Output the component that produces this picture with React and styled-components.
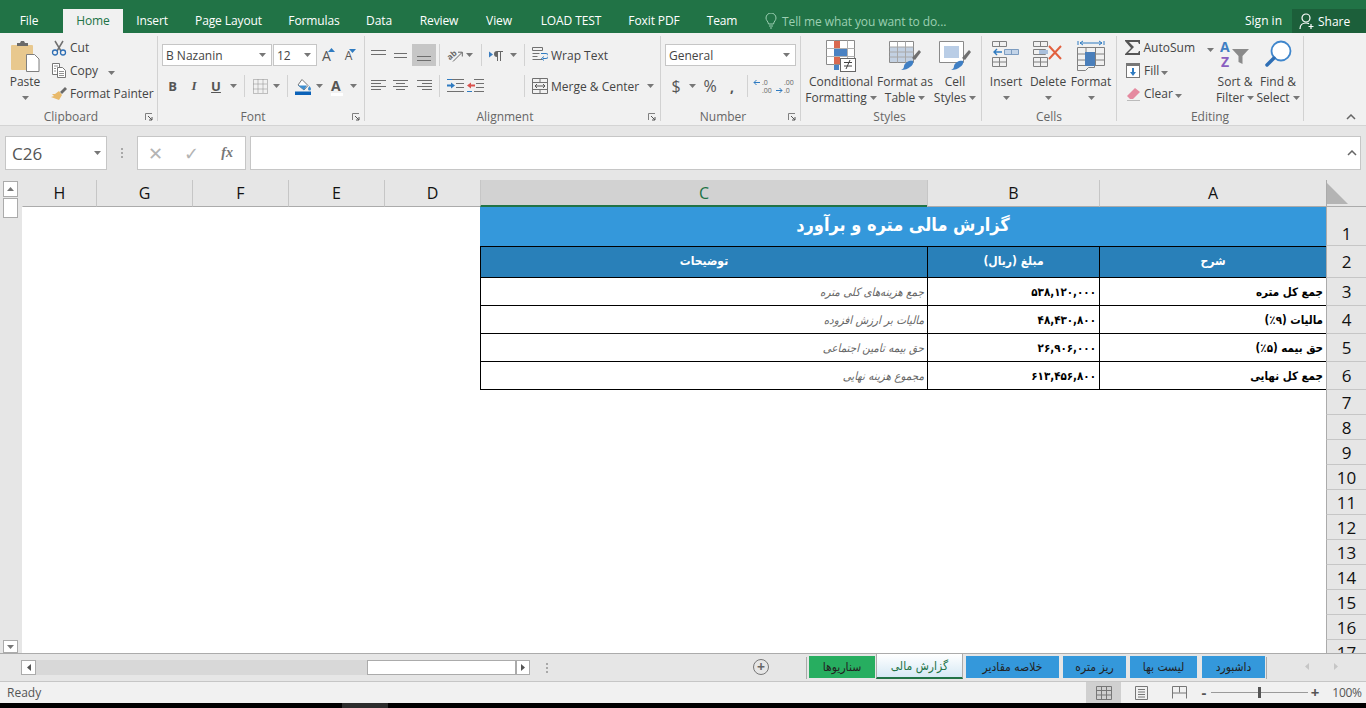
// App.jsx
import React from "react";
import styled, { createGlobalStyle } from "styled-components";

const GlobalStyle = createGlobalStyle`
  html, body { margin: 0; padding: 0; }
  body {
    width: 1366px;
    height: 708px;
    overflow: hidden;
    background: #000;
    font-family: "Open Sans", "Noto Sans", sans-serif;
    font-size: 12px;
    color: #444;
  }
  svg { display: block; flex: none; }
`;

const PERSIAN = `"DejaVu Sans Condensed", "DejaVu Sans", sans-serif`;

/* ---------- icons ---------- */

const Caret = ({ color = "#777" }) => (
  <svg width="7" height="4" viewBox="0 0 7 4"><path d="M0 0h7L3.5 4z" fill={color} /></svg>
);

const Lines = ({ rows, w = 16, h = 14 }) => (
  <svg width={w} height={h} viewBox={`0 0 ${w} ${h}`}>
    {rows.map(([x1, x2, y], i) => (
      <path key={i} d={`M${x1} ${y + 0.5}H${x2}`} stroke="#6e6e6e" />
    ))}
  </svg>
);

const PasteIcon = () => (
  <svg width="30" height="33" viewBox="0 0 30 33">
    <rect x="1" y="5" width="22" height="25" rx="1" fill="#e8c88e" />
    <path d="M7 6V3h3l1-2h3l1 2h3v3z" fill="#6a6a6a" />
    <path d="M16.500 14.500h8l4.500 4.500v12.500h-12.500z" fill="#fff" stroke="#7f7f7f" />
  </svg>
);

const CutIcon = () => (
  <svg width="16" height="16" viewBox="0 0 16 16" fill="none">
    <path d="M4 1l6 10M12 1L6 11" stroke="#707070" strokeWidth="1.500" />
    <circle cx="4" cy="12.500" r="2.500" stroke="#2f6fb5" strokeWidth="1.300" />
    <circle cx="12" cy="12.500" r="2.500" stroke="#2f6fb5" strokeWidth="1.300" />
  </svg>
);

const CopyIcon = () => (
  <svg width="16" height="15" viewBox="0 0 16 15" fill="#fff" stroke="#777">
    <path d="M1.500.5h7v11h-7z" />
    <path d="M6.500 4.500h5l3 3v7h-8z" />
    <path d="M3 3h4M3 5.500h2M3 8h2M8 8.500h5M8 10.500h5M8 12.500h5" strokeWidth=".8" />
  </svg>
);

const PainterIcon = () => (
  <svg width="16" height="15" viewBox="0 0 16 15">
    <path d="M9 6l5-5 2 2-5 5z" fill="#6a6a6a" />
    <path d="M8 5l3 4-3 5-8-3 3-1-2-2 3 0z" fill="#e8b96a" />
  </svg>
);

const BordersIcon = () => (
  <svg width="15" height="15" viewBox="0 0 15 15" fill="none" stroke="#8a8a8a" strokeDasharray="1 1">
    <path d="M.5.5h14v14H.5zM.5 5h14M.5 10h14M5 .5v14M10 .5v14" />
  </svg>
);

const FillIcon = () => (
  <svg width="17" height="17" viewBox="0 0 17 17">
    <path d="M7 1.500l6 6-4 4.500-6-5z" fill="#fff" stroke="#777" />
    <path d="M3 7.500h9L9 12z" fill="#3f8fd0" />
    <path d="M14.500 8c1 1.500 1.500 2.200 1.500 3a1.500 1.500 0 0 1-3 0c0-.8.500-1.500 1.500-3z" fill="#3f8fd0" />
    <rect x="0" y="13.500" width="16" height="3.500" fill="#0b62b8" />
  </svg>
);

const OrientIcon = () => (
  <svg width="17" height="16" viewBox="0 0 17 16">
    <text x="0" y="10" fontSize="8" fontWeight="700" fill="#666" transform="rotate(-40 6 8)" fontFamily="Open Sans">ab</text>
    <path d="M6 14.500L15 5.500M11 5.200h4.300v4.300" stroke="#666" fill="none" />
  </svg>
);

const RtlIcon = () => (
  <svg width="14" height="11" viewBox="0 0 14 11" fill="#666">
    <path d="M0 1.500l4 3-4 3z" fill="#3b7dc0" />
    <path d="M8 1a3 3 0 0 0 0 6v4h1V2h2v9h1V2h2V1z" />
  </svg>
);

const IndentIcon = ({ out }) => (
  <svg width="17" height="14" viewBox="0 0 17 14">
    <path d={out ? "M7 .5h10M9 4.500h8M9 8.500h8M7 12.500h10" : "M0 .5h17M9 4.500h8M9 8.500h8M0 12.500h17"} stroke="#707070" />
    <path d={out ? "M0 6.500l4-3v2h4v2H4v2z" : "M8 6.500l-4-3v2H0v2h4v2z"} fill={out ? "#d9534f" : "#2f7bc1"} />
    <path d={out ? "M0 12.500h5" : "M0 .5h5"} stroke="#2f7bc1" />
  </svg>
);

const WrapIcon = () => (
  <svg width="16" height="16" viewBox="0 0 16 16" fill="none" stroke="#707070">
    <path d="M.5.5h10v3H.5zM.5 6.500h7M.5 9.500h5M.5 12.500h10" />
    <path d="M9 6.500h5a1.500 1.500 0 0 1 0 5h-3" stroke="#2f7bc1" />
    <path d="M12 9.500l-2.500 2 2.500 2" stroke="#2f7bc1" />
  </svg>
);

const MergeIcon = () => (
  <svg width="16" height="16" viewBox="0 0 16 16" fill="none" stroke="#707070">
    <path d="M.5.5h15v15H.5zM.5 4.500h15M.5 11.500h15M8 .5v4M8 11.500v4" />
    <path d="M3 8h10M5 6L3 8l2 2M11 6l2 2-2 2" stroke="#555" />
  </svg>
);

const DecimalIcon = ({ more }) => (
  <svg width="19" height="15" viewBox="0 0 19 15">
    <text x="9" y="6" fontSize="7" fill="#666" fontFamily="Open Sans">{more ? ".00" : ".0"}</text>
    <text x="9" y="14" fontSize="7" fill="#666" fontFamily="Open Sans">{more ? ".0" : ".00"}</text>
    <path d={more ? "M1 11.500h6M4.500 9l2.500 2.500L4.500 14" : "M1 3.500h6M3.500 1L1 3.500 3.500 6"} stroke="#2f7bc1" fill="none" />
  </svg>
);

const CondIcon = () => (
  <svg width="30" height="32" viewBox="0 0 30 32">
    <path d="M.5.5h28v24H.5z" fill="#fff" stroke="#8a8a8a" />
    <path d="M.5 8.500h28M.5 16.500h28M8.500.5v24M21.500.5v24" stroke="#b0b0b0" />
    <rect x="8" y="1" width="6" height="7" fill="#d9694f" />
    <rect x="8" y="9" width="13" height="7" fill="#4a82c3" />
    <rect x="8" y="17" width="6" height="7" fill="#d9694f" />
    <rect x="8" y="25" width="5" height="5" fill="#4a82c3" />
    <rect x="14.500" y="18.500" width="15" height="13" fill="#fff" stroke="#666" />
    <path d="M18 22.500h8M18 26h8M24 20l-4 9" stroke="#444" fill="none" />
  </svg>
);

const Brush = () => (
  <>
    <path d="M23 18l7-8 2 2-6 8z" fill="#707070" />
    <path d="M15 26c1-4 6-6 9-5 1 2-1 5-3 6-2 2-5 3-9 3 2-1 3-2 3-4z" fill="#3f7fc4" />
  </>
);

const TableIcon = () => (
  <svg width="32" height="32" viewBox="0 0 32 32">
    <path d="M.5 1.500h24v21H.5z" fill="#fff" stroke="#8a8a8a" />
    <path d="M1 7h23v15H1z" fill="#c3d1e2" />
    <path d="M.5 7h24M.5 12h24M.5 17h24M8.500 1.500v21M16.500 1.500v21" stroke="#a8a8a8" fill="none" />
    <Brush />
  </svg>
);

const CellStyleIcon = () => (
  <svg width="32" height="32" viewBox="0 0 32 32">
    <path d="M.5 1.500h24v21H.5z" fill="#fff" stroke="#8a8a8a" />
    <rect x="5" y="6" width="15" height="12" fill="#b9cde6" />
    <Brush />
  </svg>
);

const InsertIcon = () => (
  <svg width="28" height="28" viewBox="0 0 28 28" fill="none" stroke="#808080">
    <path d="M.5 1.500h14v5H.5zM7.500 1.500v5M.5 17.500h14v9H.5zM.5 22h14M7.500 17.500v9" />
    <path d="M12.500 9.500h14v5h-14zM19.500 9.500v5" fill="#c3d4e8" stroke="#7d9cc0" />
    <path d="M10 12H2M5 9l-3 3 3 3" stroke="#2f7bc1" strokeWidth="1.400" />
  </svg>
);

const DeleteIcon = () => (
  <svg width="30" height="28" viewBox="0 0 30 28" fill="none" stroke="#808080">
    <path d="M.5 1.500h14v5H.5zM7.500 1.500v5M.5 17.500h14v9H.5zM.5 22h14M7.500 17.500v9M.5 9.500h12v5H.5z" />
    <path d="M6 10h9v4H6z" fill="#a9c0dc" stroke="none" />
    <path d="M16 6l12 13M28 6L16 19" stroke="#e2603f" strokeWidth="2" />
  </svg>
);

const FormatIcon = () => (
  <svg width="28" height="32" viewBox="0 0 28 32" fill="none" stroke="#808080">
    <path d="M.5 7.500h27v18H.5zM.5 14h27M.5 20h27M9 7.500v18M18.500 7.500v18" />
    <path d="M.5 25.500v5h8l3-3h6v-2" />
    <rect x="8" y="12" width="10" height="14" fill="#4a7fbb" stroke="none" />
    <path d="M1 1v4M27 1v4M3 3h22M6 1L3 3l3 2M22 1l3 2-3 2" stroke="#2f7bc1" />
  </svg>
);

const SumIcon = () => (
  <svg width="16" height="15" viewBox="0 0 16 15"><path d="M0 0h15v4h-1l-1-2H4l5 5-6 6h10l1-2h1v4H0v-1l6-6L0 1z" fill="#555" /></svg>
);

const FillDownIcon = () => (
  <svg width="14" height="15" viewBox="0 0 14 15">
    <rect x=".5" y=".5" width="13" height="14" fill="#fff" stroke="#777" />
    <rect x="0" y="0" width="14" height="3" fill="#777" />
    <path d="M6 5h2v4h2l-3 4-3-4h2z" fill="#2f7bc1" />
  </svg>
);

const EraserIcon = () => (
  <svg width="15" height="14" viewBox="0 0 15 14">
    <path d="M9 1l5 4-7 7H4L1 9z" fill="#e58aa0" />
    <path d="M1 13.500h13" stroke="#bbb" />
  </svg>
);

const SortIcon = () => (
  <svg width="30" height="28" viewBox="0 0 30 28">
    <text x="0" y="12" fontSize="14" fontWeight="700" fill="#3f7fc4" fontFamily="Open Sans">A</text>
    <text x="1" y="27" fontSize="14" fontWeight="700" fill="#8a5fc0" fontFamily="Open Sans">Z</text>
    <path d="M12 9h17l-6.500 7v8l-4-2v-6z" fill="#8a8a8a" />
  </svg>
);

const FindIcon = () => (
  <svg width="28" height="28" viewBox="0 0 28 28" fill="none">
    <circle cx="17" cy="11" r="9.500" stroke="#3f86cc" strokeWidth="1.800" fill="#fff" />
    <path d="M10 18l-7 7" stroke="#2f6fb5" strokeWidth="3.500" strokeLinecap="round" />
  </svg>
);

const BulbIcon = () => (
  <svg width="12" height="16" viewBox="0 0 12 16" fill="none" stroke="#9ccfb2">
    <path d="M3.500 11C3 8 1 7.500 1 5a5 5 0 0 1 10 0c0 2.500-2 3-2.500 6zM4 13h4M5 15h2" />
  </svg>
);

const ShareIcon = () => (
  <svg width="16" height="17" viewBox="0 0 16 17" fill="none" stroke="#fff" strokeWidth="1.200">
    <circle cx="7" cy="5" r="4" />
    <path d="M1 16c0-4 2.500-6 6-6 1 0 2 .2 3 .6M12 11v5M9.500 13.500h5" />
  </svg>
);

const LauncherIcon = () => (
  <svg width="8" height="8" viewBox="0 0 8 8" fill="none" stroke="#808080">
    <path d="M.5 7V.5H7" />
    <path d="M3 3l4 4M7 4v3H4" stroke="#555" />
  </svg>
);

const Chevron = () => (
  <svg width="10" height="6" viewBox="0 0 10 6" fill="none" stroke="#666" strokeWidth="1.500"><path d="M1 5l4-4 4 4" /></svg>
);

const CornerIcon = () => (
  <svg width="21" height="21" viewBox="0 0 21 21"><path d="M0 0l21 21H0z" fill="#b4b4b4" /></svg>
);

const Arrow = ({ dir, color = "#777" }) => {
  const d = { up: "M0 4l3.500-4L7 4z", down: "M0 0h7L3.500 4z" }[dir];
  if (d) return <svg width="7" height="4" viewBox="0 0 7 4"><path d={d} fill={color} /></svg>;
  return (
    <svg width="4" height="7" viewBox="0 0 4 7">
      <path d={dir === "left" ? "M4 0v7L0 3.500z" : "M0 0v7l4-3.500z"} fill={color} />
    </svg>
  );
};

/* ---------- title bar ---------- */

const TitleBar = styled.div`
  height: 33px;
  background: #217346;
  display: flex;
  align-items: flex-end;
  color: #fff;
`;

const Tab = styled.div`
  width: ${(p) => p.$w}px;
  margin-right: ${(p) => p.$mr || 0}px;
  height: 24px;
  line-height: 23px;
  text-align: center;
  white-space: nowrap;
  letter-spacing: -0.1px;
  background: ${(p) => (p.$active ? "#f1f1f1" : "transparent")};
  color: ${(p) => (p.$active ? "#217346" : "#fff")};
`;

const TellMe = styled.div`
  margin-left: 13px;
  height: 24px;
  display: flex;
  align-items: center;
  gap: 5px;
  color: #9ccfb2;
  letter-spacing: -0.1px;
`;

const TitleRight = styled.div`
  margin-left: auto;
  display: flex;
  align-items: flex-end;
`;

const SignIn = styled.div`
  height: 24px;
  line-height: 23px;
  margin-right: 10px;
`;

const ShareBox = styled.div`
  width: 74px;
  height: 24px;
  padding-left: 7px;
  box-sizing: border-box;
  background: #1c5f3a;
  display: flex;
  align-items: center;
  gap: 3px;
`;

/* ---------- ribbon ---------- */

const Ribbon = styled.div`
  height: 92px;
  box-sizing: border-box;
  padding-top: 3px;
  background: #f1f1f1;
  border-bottom: 1px solid #d4d4d4;
  height: 93px;
  display: flex;
`;

const Group = styled.div`
  position: relative;
  width: ${(p) => p.$w}px;
  height: 85px;
  box-sizing: border-box;
  border-right: 1px solid #d2d2d2;
  flex: none;
`;

const GroupBody = styled.div`
  height: 73px;
  display: flex;
  padding-left: ${(p) => p.$pl || 0}px;
`;

const GroupLabel = styled.div`
  height: 16px;
  line-height: 16px;
  text-align: center;
  color: #666;
  padding-right: ${(p) => p.$pr || 0}px;
`;

const Launcher = styled.div`
  position: absolute;
  right: 4px;
  bottom: 0;
`;

const ChevronSlot = styled.div`
  flex: 1;
  display: flex;
  align-items: flex-end;
  justify-content: flex-end;
  padding: 0 10px 5px 0;
`;

const BigButton = styled.div`
  width: ${(p) => p.$w}px;
  flex: none;
  display: flex;
  flex-direction: column;
  align-items: center;
  padding-top: 4px;
  color: #444;
`;

const BigIcon = styled.div`
  height: 34px;
  display: flex;
  align-items: flex-start;
  justify-content: center;
`;

const BigText = styled.div`
  height: 16px;
  line-height: 16px;
  white-space: nowrap;
  display: flex;
  align-items: center;
  gap: 3px;
`;

const SmallStack = styled.div`
  width: ${(p) => p.$w}px;
  flex: none;
`;

const SmallRow = styled.div`
  height: 23px;
  display: flex;
  align-items: center;
  white-space: nowrap;
`;

const SmallIcon = styled.div`
  width: 18px;
  display: flex;
  justify-content: center;
`;

const SmallText = styled.span`
  margin-left: 2px;
`;

const CaretGap = styled.span`
  margin-left: ${(p) => p.$ml}px;
  display: inline-flex;
`;

const TwoRows = styled.div`
  padding-top: 8px;
  display: flex;
  flex-direction: column;
  gap: 9px;
`;

const ToolRow = styled.div`
  height: 22px;
  display: flex;
  align-items: center;
`;

const Btn = styled.div`
  width: ${(p) => p.$w}px;
  height: 22px;
  flex: none;
  display: flex;
  align-items: center;
  justify-content: center;
  background: ${(p) => (p.$on ? "#c6c6c6" : "transparent")};
`;

const Sep = styled.div`
  width: 1px;
  height: 22px;
  flex: none;
  background: #d2d2d2;
  margin: 0 ${(p) => p.$r}px 0 ${(p) => p.$l}px;
`;

const SelectBox = styled.div`
  width: ${(p) => p.$w}px;
  height: 22px;
  box-sizing: border-box;
  background: #fff;
  border: 1px solid #c6c6c6;
  margin-left: ${(p) => p.$ml || 0}px;
  padding: 0 5px 0 3px;
  display: flex;
  align-items: center;
  justify-content: space-between;
  color: #444;
`;

const Letter = styled.span`
  font-size: ${(p) => p.$size || 13}px;
  font-weight: ${(p) => (p.$bold ? 700 : 400)};
  font-style: ${(p) => (p.$italic ? "italic" : "normal")};
  text-decoration: ${(p) => (p.$under ? "underline" : "none")};
  font-family: ${(p) => (p.$serif ? '"Liberation Serif", serif' : "inherit")};
  color: ${(p) => p.$color || "#555"};
`;

const SizedA = styled.div`
  position: relative;
  padding-right: 4px;
`;

const Tick = styled.div`
  position: absolute;
  top: 2px;
  right: 0;
  line-height: 0;
`;

const Underbar = styled.div`
  width: 12px;
  height: 3px;
  background: #fff;
  margin: -2px auto 0;
`;

const TextLabel = styled.span`
  margin-left: 3px;
  white-space: nowrap;
  color: #444;
`;

/* ---------- formula bar ---------- */

const FormulaBar = styled.div`
  height: 54px;
  box-sizing: border-box;
  padding: 10px 5px 0;
  background: #e6e6e6;
  display: flex;
  align-items: flex-start;
`;

const BarBox = styled.div`
  height: 34px;
  box-sizing: border-box;
  background: #fff;
  border: 1px solid #c6c6c6;
  display: flex;
  align-items: center;
  flex: ${(p) => (p.$grow ? 1 : "none")};
  width: ${(p) => (p.$w ? `${p.$w}px` : "auto")};
  margin-left: ${(p) => p.$ml || 0}px;
`;

const NameText = styled.span`
  font-size: 17px;
  color: #555;
  margin-left: 6px;
  flex: 1;
`;

const BarCaret = styled.div`
  margin-right: ${(p) => p.$mr}px;
`;

const Dots = styled.div`
  width: 2px;
  height: 10px;
  margin: 12px 14px 0 14px;
  background: repeating-linear-gradient(to bottom, #a8a8a8 0 2px, transparent 2px 4px);
  flex: none;
`;

const FxSlot = styled.div`
  width: 37px;
  display: flex;
  justify-content: center;
  color: #b4b4b4;
  font-size: 18px;
`;

const FxText = styled.span`
  font-family: "Liberation Serif", serif;
  font-style: italic;
  font-weight: 700;
  font-size: 14px;
  color: #777;
`;

/* ---------- sheet ---------- */

const SheetArea = styled.div`
  height: 474px;
  display: flex;
  background: #e6e6e6;
  border-bottom: 1px solid #ababab;
  box-sizing: border-box;
`;

const VScroll = styled.div`
  width: 22px;
  flex: none;
  box-sizing: border-box;
  padding: 1px 3px 0;
  display: flex;
  flex-direction: column;
`;

const ScrollBtn = styled.div`
  width: ${(p) => p.$w || 15}px;
  height: ${(p) => p.$h || 15}px;
  box-sizing: border-box;
  background: #fff;
  border: 1px solid #ababab;
  display: flex;
  align-items: center;
  justify-content: center;
  flex: none;
`;

const VThumb = styled.div`
  width: 15px;
  height: 20px;
  margin-top: 1px;
  box-sizing: border-box;
  background: #fff;
  border: 1px solid #ababab;
`;

const VTrack = styled.div`
  flex: 1;
`;

const Grid = styled.div`
  direction: rtl;
  flex: 1;
  min-width: 0;
  background: #fff;
  overflow: hidden;
  display: grid;
  grid-template-columns: 40px 227px 172px 447px 96px 96px 96px 96px 74px;
  grid-template-rows: 27px 39px 32px 28px 28px 28px 28px repeat(11, 25px);
`;

const Corner = styled.div`
  background: #e6e6e6;
  border-bottom: 1px solid #ababab;
  border-left: 1px solid #ababab;
  padding: 3px 3px 0 0;
  box-sizing: border-box;
  display: flex;
  justify-content: flex-end;
`;

const ColHead = styled.div`
  box-sizing: border-box;
  background: ${(p) => (p.$sel ? "#d2d2d2" : "#e6e6e6")};
  border-bottom: ${(p) => (p.$sel ? "2px solid #217346" : "1px solid #ababab")};
  border-left: 1px solid ${(p) => (p.$last ? "transparent" : "#c6c6c6")};
  color: ${(p) => (p.$sel ? "#217346" : "#111")};
  font-size: 16px;
  line-height: 27px;
  text-align: center;
`;

const RowHead = styled.div`
  grid-column: 1;
  box-sizing: border-box;
  background: #e6e6e6;
  border-bottom: 1px solid #c6c6c6;
  border-left: 1px solid #ababab;
  color: #111;
  font-size: 17px;
  text-align: center;
  display: flex;
  align-items: ${(p) => p.$align || "center"};
  justify-content: center;
`;

const TitleCell = styled.div`
  grid-column: span 3;
  background: #3498db;
  color: #fff;
  font-family: ${PERSIAN};
  font-weight: 700;
  font-size: 18px;
  display: flex;
  align-items: center;
  justify-content: center;
  padding-bottom: 4px;
  box-sizing: border-box;
`;

const HeadCell = styled.div`
  background: #2980b9;
  color: #fff;
  font-family: ${PERSIAN};
  font-weight: 700;
  font-size: 12px;
  border: 1px solid #000;
  border-width: 1px 0 1px 1px;
  display: flex;
  align-items: center;
  justify-content: center;
  padding-bottom: 2px;
  box-sizing: border-box;
`;

const DataCell = styled.div`
  background: #fff;
  color: ${(p) => (p.$note ? "#666" : "#000")};
  font-family: ${PERSIAN};
  font-weight: ${(p) => (p.$note ? 400 : 700)};
  font-style: ${(p) => (p.$note ? "italic" : "normal")};
  font-size: 11.500px;
  border-bottom: 1px solid #000;
  border-left: 1px solid #000;
  display: flex;
  align-items: center;
  padding: 0 3px;
  white-space: nowrap;
  box-sizing: border-box;
`;

/* ---------- sheet tabs ---------- */

const TabBar = styled.div`
  height: 28px;
  box-sizing: border-box;
  background: #e6e6e6;
  border-bottom: 1px solid #c6c6c6;
  display: flex;
  align-items: flex-start;
`;

const HScroll = styled.div`
  margin: 6px 0 0 21px;
  display: flex;
`;

const HTrack = styled.div`
  width: 331px;
  height: 15px;
  background: #d8d8d8;
`;

const HThumb = styled.div`
  width: 149px;
  height: 15px;
  box-sizing: border-box;
  background: #fff;
  border: 1px solid #ababab;
`;

const TabDots = styled(Dots)`
  margin: 9px 0 0 16px;
`;

const AddSheet = styled.div`
  margin: 5px 0 0 205px;
  width: 16px;
  height: 16px;
  box-sizing: border-box;
  border: 1px solid #777;
  border-radius: 50%;
  color: #666;
  display: flex;
  align-items: center;
  justify-content: center;
  font-size: 14px;
  font-weight: 700;
  line-height: 1;
`;

const TabSep = styled.div`
  width: 1px;
  height: 22px;
  margin: 3px ${(p) => p.$r}px 0 ${(p) => p.$l}px;
  background: #ababab;
  flex: none;
`;

const SheetTab = styled.div`
  width: ${(p) => p.$w}px;
  height: ${(p) => (p.$active ? 25 : 22)}px;
  margin: ${(p) => (p.$active ? 0 : 2)}px ${(p) => p.$mr || 0}px 0 0;
  flex: none;
  box-sizing: border-box;
  background: ${(p) => {
    if (p.$active) return "linear-gradient(to bottom, #fff, #d6e9f5)";
    return p.$green ? "#27ae60" : "#3498db";
  }};
  color: ${(p) => (p.$active ? "#217346" : "#222")};
  border: ${(p) => (p.$active ? "1px solid #ababab" : "0")};
  border-top: ${(p) => (p.$active ? "0" : "0")};
  border-bottom: ${(p) => (p.$active ? "2px solid #217346" : "0")};
  font-family: ${PERSIAN};
  font-size: 12px;
  display: flex;
  align-items: center;
  justify-content: center;
  white-space: nowrap;
`;

const TabArrows = styled.div`
  margin: 9px 0 0 38px;
  display: flex;
  gap: 25px;
`;

/* ---------- status bar ---------- */

const StatusBar = styled.div`
  height: 21px;
  background: #f1f1f1;
  display: flex;
  align-items: center;
  padding-left: 7px;
  color: #555;
`;

const StatusRight = styled.div`
  margin-left: auto;
  display: flex;
  align-items: center;
  height: 100%;
`;

const ViewBtn = styled.div`
  width: ${(p) => p.$w}px;
  height: 100%;
  display: flex;
  align-items: center;
  justify-content: center;
  background: ${(p) => (p.$on ? "#d0d0d0" : "transparent")};
`;

const ZoomSign = styled.span`
  width: 14px;
  text-align: center;
  color: #555;
  font-size: 15px;
  font-weight: 700;
  line-height: 1;
`;

const Slider = styled.div`
  position: relative;
  width: 97px;
  height: 1px;
  background: #9a9a9a;
`;

const SliderThumb = styled.div`
  position: absolute;
  left: 47px;
  top: -5px;
  width: 3px;
  height: 11px;
  background: #555;
`;

const ZoomPct = styled.div`
  width: 38px;
  margin-left: 6px;
  text-align: center;
  letter-spacing: -0.3px;
`;

const Taskbar = styled.div`
  height: 5px;
  background: #000;
  display: flex;
`;

const TaskItem = styled.div`
  width: 46px;
  margin-left: 342px;
  background: #2c2c2c;
`;

/* ---------- data ---------- */

const tabs = [
  ["Home", 60], ["Insert", 58], ["Page Layout", 95], ["Formulas", 76], ["Data", 54],
  ["Review", 66], ["View", 54], ["LOAD TEST", 90], ["Foxit PDF", 76], ["Team", 60],
];

const columns = ["A", "B", "C", "D", "E", "F", "G", "H"];

const rows = [
  ["جمع کل متره", "۵۳۸,۱۲۰,۰۰۰", "جمع هزینه‌های کلی متره"],
  ["مالیات (۹٪)", "۴۸,۴۳۰,۸۰۰", "مالیات بر ارزش افزوده"],
  ["حق بیمه (۵٪)", "۲۶,۹۰۶,۰۰۰", "حق بیمه تامین اجتماعی"],
  ["جمع کل نهایی", "۶۱۳,۴۵۶,۸۰۰", "مجموع هزینه نهایی"],
];

const headers = ["شرح", "مبلغ (ریال)", "توضیحات"];

const emptyRows = [8, 9, 10, 11, 12, 13, 14, 15, 16, 17];

const Big = ({ w, icon, children, second }) => (
  <BigButton $w={w}>
    <BigIcon>{icon}</BigIcon>
    <BigText>{children}</BigText>
    <BigText>{second}</BigText>
  </BigButton>
);

const Small = ({ icon, children }) => (
  <SmallRow>
    <SmallIcon>{icon}</SmallIcon>
    <SmallText>{children}</SmallText>
  </SmallRow>
);

const App = () => {
  return (
    <>
      <GlobalStyle />
      <TitleBar>
        <Tab $w={58} $mr={5}>File</Tab>
        {tabs.map(([name, w]) => (
          <Tab key={name} $w={w} $active={name === "Home"}>{name}</Tab>
        ))}
        <TellMe><BulbIcon />Tell me what you want to do...</TellMe>
        <TitleRight>
          <SignIn>Sign in</SignIn>
          <ShareBox><ShareIcon />Share</ShareBox>
        </TitleRight>
      </TitleBar>

      <Ribbon>
        <Group $w={158}>
          <GroupBody>
            <Big w={50} icon={<PasteIcon />} second={<Caret />}>Paste</Big>
            <SmallStack $w={107}>
              <Small icon={<CutIcon />}>Cut</Small>
              <Small icon={<CopyIcon />}>Copy<CaretGap $ml={10}><Caret /></CaretGap></Small>
              <Small icon={<PainterIcon />}>Format Painter</Small>
            </SmallStack>
          </GroupBody>
          <GroupLabel $pr={15}>Clipboard</GroupLabel>
          <Launcher><LauncherIcon /></Launcher>
        </Group>

        <Group $w={207}>
          <GroupBody $pl={4}>
            <TwoRows>
              <ToolRow>
                <SelectBox $w={110}>B Nazanin<Caret /></SelectBox>
                <SelectBox $w={44} $ml={1}>12<Caret /></SelectBox>
                <Btn $w={23}>
                  <SizedA><Letter $size={14}>A</Letter><Tick><Arrow dir="up" color="#2f7bc1" /></Tick></SizedA>
                </Btn>
                <Btn $w={21}>
                  <SizedA><Letter $size={12}>A</Letter><Tick><Arrow dir="down" color="#2f7bc1" /></Tick></SizedA>
                </Btn>
              </ToolRow>
              <ToolRow>
                <Btn $w={21}><Letter $bold>B</Letter></Btn>
                <Btn $w={22}><Letter $italic $bold $serif>I</Letter></Btn>
                <Btn $w={22}><Letter $under $bold>U</Letter></Btn>
                <Btn $w={12}><Caret /></Btn>
                <Sep $l={5} $r={3} />
                <Btn $w={24}><BordersIcon /></Btn>
                <Btn $w={9}><Caret /></Btn>
                <Sep $l={6} $r={4} />
                <Btn $w={22}><FillIcon /></Btn>
                <Btn $w={10}><Caret /></Btn>
                <Btn $w={26}>
                  <div><Letter $size={14} $bold>A</Letter><Underbar /></div>
                </Btn>
                <Btn $w={6}><Caret /></Btn>
              </ToolRow>
            </TwoRows>
          </GroupBody>
          <GroupLabel $pr={16}>Font</GroupLabel>
          <Launcher><LauncherIcon /></Launcher>
        </Group>

        <Group $w={296}>
          <GroupBody $pl={3}>
            <TwoRows>
              <ToolRow>
                <Btn $w={22}><Lines rows={[[0, 15, 2], [0, 15, 6]]} /></Btn>
                <Btn $w={22}><Lines rows={[[1, 14, 5], [1, 14, 9]]} /></Btn>
                <Btn $w={24} $on><Lines rows={[[1, 15, 8], [1, 15, 12]]} /></Btn>
                <Sep $l={3} $r={5} />
                <Btn $w={21}><OrientIcon /></Btn>
                <Btn $w={7}><Caret /></Btn>
                <Sep $l={8} $r={3} />
                <Btn $w={22}><RtlIcon /></Btn>
                <Btn $w={12}><Caret /></Btn>
                <Sep $l={5} $r={7} />
                <WrapIcon />
                <TextLabel>Wrap Text</TextLabel>
              </ToolRow>
              <ToolRow>
                <Btn $w={22}><Lines rows={[[0, 15, 1], [0, 10, 4], [0, 15, 7], [0, 10, 10]]} /></Btn>
                <Btn $w={22}><Lines rows={[[0, 15, 1], [3, 12, 4], [0, 15, 7], [3, 12, 10]]} /></Btn>
                <Btn $w={24}><Lines rows={[[1, 16, 1], [6, 16, 4], [1, 16, 7], [6, 16, 10]]} /></Btn>
                <Sep $l={3} $r={5} />
                <Btn $w={20}><IndentIcon /></Btn>
                <Btn $w={21}><IndentIcon out /></Btn>
                <Sep $l={38} $r={7} />
                <MergeIcon />
                <TextLabel>Merge &amp; Center</TextLabel>
                <CaretGap $ml={8}><Caret /></CaretGap>
              </ToolRow>
            </TwoRows>
          </GroupBody>
          <GroupLabel $pr={15}>Alignment</GroupLabel>
          <Launcher><LauncherIcon /></Launcher>
        </Group>

        <Group $w={140}>
          <GroupBody $pl={4}>
            <TwoRows>
              <ToolRow>
                <SelectBox $w={131}>General<Caret /></SelectBox>
              </ToolRow>
              <ToolRow>
                <Btn $w={22}><Letter $size={16}>$</Letter></Btn>
                <Btn $w={10}><Caret /></Btn>
                <Btn $w={26}><Letter $size={16}>%</Letter></Btn>
                <Btn $w={18}><Letter $size={14} $bold>,</Letter></Btn>
                <Sep $l={6} $r={3} />
                <Btn $w={22}><DecimalIcon /></Btn>
                <Btn $w={23}><DecimalIcon more /></Btn>
              </ToolRow>
            </TwoRows>
          </GroupBody>
          <GroupLabel $pr={15}>Number</GroupLabel>
          <Launcher><LauncherIcon /></Launcher>
        </Group>

        <Group $w={181}>
          <GroupBody>
            <Big w={80} icon={<CondIcon />} second={<>Formatting<Caret /></>}>Conditional</Big>
            <Big w={48} icon={<TableIcon />} second={<>Table<Caret /></>}>Format as</Big>
            <Big w={52} icon={<CellStyleIcon />} second={<>Styles<Caret /></>}>Cell</Big>
          </GroupBody>
          <GroupLabel $pr={3}>Styles</GroupLabel>
        </Group>

        <Group $w={135}>
          <GroupBody>
            <Big w={48} icon={<InsertIcon />} second={<Caret />}>Insert</Big>
            <Big w={36} icon={<DeleteIcon />} second={<Caret />}>Delete</Big>
            <Big w={50} icon={<FormatIcon />} second={<Caret />}>Format</Big>
          </GroupBody>
          <GroupLabel>Cells</GroupLabel>
        </Group>

        <Group $w={187}>
          <GroupBody $pl={7}>
            <SmallStack $w={90}>
              <Small icon={<SumIcon />}>AutoSum<CaretGap $ml={12}><Caret /></CaretGap></Small>
              <Small icon={<FillDownIcon />}>Fill<CaretGap $ml={2}><Caret /></CaretGap></Small>
              <Small icon={<EraserIcon />}>Clear<CaretGap $ml={2}><Caret /></CaretGap></Small>
            </SmallStack>
            <Big w={42} icon={<SortIcon />} second={<>Filter<Caret /></>}>Sort &amp;</Big>
            <Big w={44} icon={<FindIcon />} second={<>Select<Caret /></>}>Find &amp;</Big>
          </GroupBody>
          <GroupLabel>Editing</GroupLabel>
        </Group>

        <ChevronSlot><Chevron /></ChevronSlot>
      </Ribbon>

      <FormulaBar>
        <BarBox $w={102}>
          <NameText>C26</NameText>
          <BarCaret $mr={5}><Caret /></BarCaret>
        </BarBox>
        <Dots />
        <BarBox $w={109}>
          <FxSlot>✕</FxSlot>
          <FxSlot>✓</FxSlot>
          <FxSlot><FxText>fx</FxText></FxSlot>
        </BarBox>
        <BarBox $grow $ml={4}>
          <NameText />
          <BarCaret $mr={3}><Chevron /></BarCaret>
        </BarBox>
      </FormulaBar>

      <SheetArea>
        <VScroll>
          <ScrollBtn $h={16}><Arrow dir="up" /></ScrollBtn>
          <VThumb />
          <VTrack />
          <ScrollBtn $h={13}><Arrow dir="down" /></ScrollBtn>
        </VScroll>
        <Grid>
          <Corner><CornerIcon /></Corner>
          {columns.map((c) => (
            <ColHead key={c} $sel={c === "C"} $last={c === "H"}>{c}</ColHead>
          ))}

          <RowHead $align="flex-end">1</RowHead>
          <TitleCell>گزارش مالی متره و برآورد</TitleCell>

          <RowHead>2</RowHead>
          {headers.map((h) => <HeadCell key={h}>{h}</HeadCell>)}

          {rows.map((r, i) => (
            <React.Fragment key={i}>
              <RowHead>{i + 3}</RowHead>
              <DataCell>{r[0]}</DataCell>
              <DataCell>{r[1]}</DataCell>
              <DataCell $note>{r[2]}</DataCell>
            </React.Fragment>
          ))}

          <RowHead>7</RowHead>
          {emptyRows.map((n) => <RowHead key={n}>{n}</RowHead>)}
        </Grid>
      </SheetArea>

      <TabBar>
        <HScroll>
          <ScrollBtn $w={15}><Arrow dir="left" color="#555" /></ScrollBtn>
          <HTrack />
          <HThumb />
          <ScrollBtn $w={14}><Arrow dir="right" color="#555" /></ScrollBtn>
        </HScroll>
        <TabDots />
        <AddSheet>+</AddSheet>
        <TabSep $l={37} $r={2} />
        <SheetTab $w={66} $green $mr={1}>سناریوها</SheetTab>
        <SheetTab $w={87} $active $mr={3}>گزارش مالی</SheetTab>
        <SheetTab $w={93} $mr={4}>خلاصه مقادیر</SheetTab>
        <SheetTab $w={63} $mr={4}>ریز متره</SheetTab>
        <SheetTab $w={67} $mr={5}>لیست بها</SheetTab>
        <SheetTab $w={63}>داشبورد</SheetTab>
        <TabSep $l={1} $r={0} />
        <TabArrows>
          <Arrow dir="left" color="#c6c6c6" />
          <Arrow dir="right" color="#c6c6c6" />
        </TabArrows>
      </TabBar>

      <StatusBar>
        Ready
        <StatusRight>
          <ViewBtn $w={35} $on>
            <svg width="16" height="14" viewBox="0 0 16 14" fill="none" stroke="#777">
              <path d="M.5.5h15v13H.5zM.5 4.500h15M.5 9h15M5.500.5v13M10.500.5v13" />
            </svg>
          </ViewBtn>
          <ViewBtn $w={41}>
            <svg width="13" height="14" viewBox="0 0 13 14" fill="none" stroke="#777">
              <path d="M.5.5h12v13H.5zM3 3.500h7M3 6h7M3 8.500h7M3 11h7" />
            </svg>
          </ViewBtn>
          <ViewBtn $w={35}>
            <svg width="15" height="13" viewBox="0 0 15 13" fill="none" stroke="#777">
              <path d="M.5 12.500V.5h14v12M7.500.5v6M.5 7h14" />
            </svg>
          </ViewBtn>
          <ZoomSign>-</ZoomSign>
          <Slider><SliderThumb /></Slider>
          <ZoomSign>+</ZoomSign>
          <ZoomPct>100%</ZoomPct>
        </StatusRight>
      </StatusBar>
      <Taskbar><TaskItem /></Taskbar>
    </>
  );
};

export default App;
